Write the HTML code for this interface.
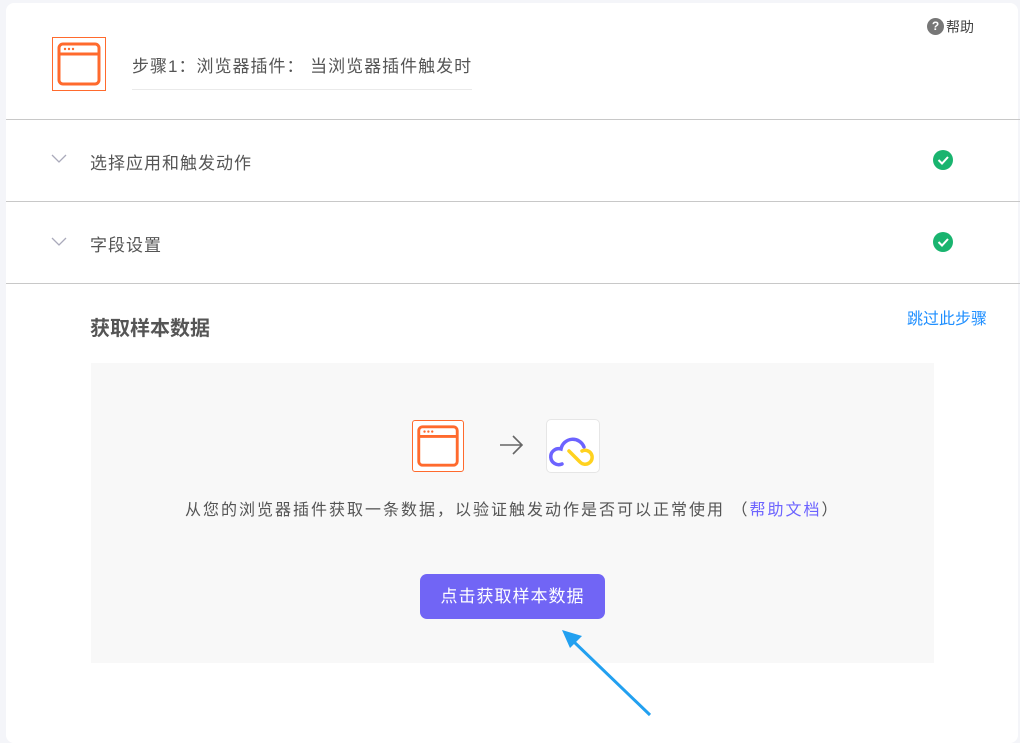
<!DOCTYPE html><html><head><meta charset="utf-8"><style>
body{margin:0;width:1020px;height:727px;background:#f4f5f9;font-family:"Liberation Sans","Noto Sans CJK SC",sans-serif;overflow:hidden;position:relative}
.card{position:absolute;left:6px;top:3px;width:1012px;height:740px;background:#fff;border-radius:8px}
.a{position:absolute;white-space:nowrap}
.hr{position:absolute;left:6px;width:1014px;height:1px;background:#c8c8c8}
.t{color:#555;font-size:17px;letter-spacing:1px}
.chk{position:absolute;width:20px;height:20px;border-radius:50%;background:#19b46f}
</style></head><body>
<div class="card"></div>
<div class="a" style="left:927px;top:18px;font-size:14px;color:#444;line-height:18px"><span style="display:inline-block;width:17px;height:17px;border-radius:50%;background:#777;color:#fff;font-size:12px;text-align:center;line-height:17px;font-weight:bold;vertical-align:top;margin-right:2px">?</span>帮助</div>
<div class="a" style="left:52px;top:37px;width:54px;height:54px;border:1px solid #ff6a2d;box-sizing:border-box">
<svg width="52" height="52" viewBox="0 0 52 52"><rect x="6" y="6" width="40" height="40" rx="4" fill="none" stroke="#ff6a2d" stroke-width="3"/><line x1="6" y1="16" x2="46" y2="16" stroke="#ff6a2d" stroke-width="3"/><circle cx="12" cy="11" r="1.2" fill="#ff6a2d"/><circle cx="16" cy="11" r="1.2" fill="#ff6a2d"/><circle cx="20" cy="11" r="1.2" fill="#ff6a2d"/></svg></div>
<div class="a t" style="left:132px;top:52px">步骤1：浏览器插件： 当浏览器插件触发时</div>
<div class="a" style="left:132px;top:89px;width:340px;height:1px;background:#eaeaea"></div>
<div class="hr" style="top:119px"></div>
<svg class="a" style="left:51px;top:154px" width="16" height="10"><path d="M1 1L8 8L15 1" fill="none" stroke="#aab" stroke-width="1.3"/></svg>
<div class="a t" style="left:90px;top:149px">选择应用和触发动作</div>
<div class="chk" style="left:933px;top:150px"><svg width="20" height="20"><path d="M5.5 10L9 13.5L15 7" fill="none" stroke="#fff" stroke-width="2"/></svg></div>
<div class="hr" style="top:201px"></div>
<svg class="a" style="left:51px;top:237px" width="16" height="10"><path d="M1 1L8 8L15 1" fill="none" stroke="#aab" stroke-width="1.3"/></svg>
<div class="a t" style="left:90px;top:231px">字段设置</div>
<div class="chk" style="left:933px;top:232px"><svg width="20" height="20"><path d="M5.5 10L9 13.5L15 7" fill="none" stroke="#fff" stroke-width="2"/></svg></div>
<div class="hr" style="top:283px"></div>
<div class="a" style="left:90px;top:312px;font-size:20px;font-weight:bold;color:#555">获取样本数据</div>
<div class="a" style="left:907px;top:305px;font-size:16px;color:#1f8fff">跳过此步骤</div>
<div class="a" style="left:91px;top:363px;width:843px;height:300px;background:#f8f8f8"></div>
<div class="a" style="left:412px;top:420px;width:52px;height:52px;border:1px solid #ff6a2d;border-radius:3px;box-sizing:border-box;background:#fff">
<svg width="50" height="50" viewBox="0 0 52 52"><rect x="6" y="6" width="40" height="40" rx="4" fill="none" stroke="#ff6a2d" stroke-width="3"/><line x1="6" y1="16" x2="46" y2="16" stroke="#ff6a2d" stroke-width="3"/><circle cx="12" cy="11" r="1.2" fill="#ff6a2d"/><circle cx="16" cy="11" r="1.2" fill="#ff6a2d"/><circle cx="20" cy="11" r="1.2" fill="#ff6a2d"/></svg></div>
<svg class="a" style="left:498px;top:433px" width="28" height="24"><path d="M2 12H24M15 3L24 12L15 21" fill="none" stroke="#666" stroke-width="1.6"/></svg>
<div class="a" style="left:546px;top:419px;width:52px;height:52px;border:1px solid #e6e6e6;border-radius:5px;background:#fff">
<svg width="52" height="52"><path d="M15 44A8 8 0 1 1 14 29A12 12 0 0 1 37 27" fill="none" stroke="#6c63ff" stroke-width="3.5" stroke-linecap="round"/><path d="M22 31L33 42A7 7 0 1 0 35 31" fill="none" stroke="#ffd21f" stroke-width="3.5" stroke-linecap="round"/></svg></div>
<div class="a" style="left:185px;top:496px;font-size:16px;color:#555;letter-spacing:2px">从您的浏览器插件获取一条数据，以验证触发动作是否可以正常使用 （<span style="color:#6c63ff">帮助文档</span>）</div>
<div class="a" style="left:420px;top:574px;width:185px;height:45px;background:#7165f5;border-radius:7px;color:#fff;font-size:17px;letter-spacing:1px;text-align:center;line-height:45px">点击获取样本数据</div>
<svg class="a" style="left:550px;top:620px" width="110" height="100"><path d="M100 95L22 20" stroke="#22a0f0" stroke-width="3"/><path d="M12 10L32 16L20 28Z" fill="#22a0f0"/></svg>
</body></html>
